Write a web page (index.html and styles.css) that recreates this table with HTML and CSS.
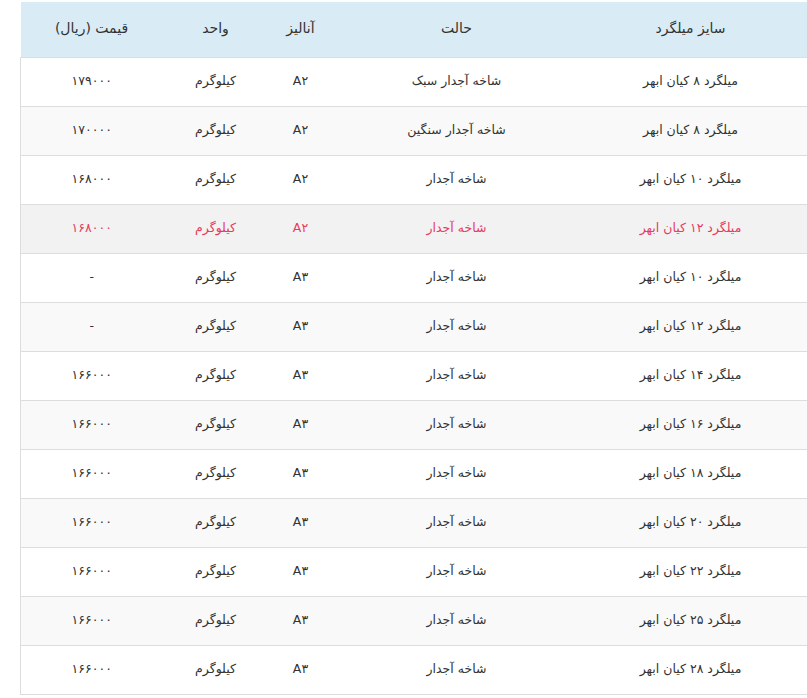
FILE: index.html
```html
<!DOCTYPE html>
<html lang="fa" dir="rtl">
<head>
<meta charset="utf-8">
<title>قیمت میلگرد</title>
<link rel="stylesheet" href="styles.css">
</head>
<body>
<div class="wrap">
<table class="price-table">
<colgroup>
<col class="c-size"><col class="c-state"><col class="c-an"><col class="c-unit"><col class="c-price">
</colgroup>
<thead>
<tr><th class="size">سایز میلگرد</th><th>حالت</th><th>آنالیز</th><th>واحد</th><th>قیمت (ریال)</th></tr>
</thead>
<tbody>
<tr><td class="size">میلگرد ۸ کیان ابهر</td><td>شاخه آجدار سبک</td><td>A۲</td><td>کیلوگرم</td><td>۱۷۹۰۰۰</td></tr>
<tr><td class="size">میلگرد ۸ کیان ابهر</td><td>شاخه آجدار سنگین</td><td>A۲</td><td>کیلوگرم</td><td>۱۷۰۰۰۰</td></tr>
<tr><td class="size">میلگرد ۱۰ کیان ابهر</td><td>شاخه آجدار</td><td>A۲</td><td>کیلوگرم</td><td>۱۶۸۰۰۰</td></tr>
<tr class="hot"><td class="size">میلگرد ۱۲ کیان ابهر</td><td>شاخه آجدار</td><td>A۲</td><td>کیلوگرم</td><td>۱۶۸۰۰۰</td></tr>
<tr><td class="size">میلگرد ۱۰ کیان ابهر</td><td>شاخه آجدار</td><td>A۳</td><td>کیلوگرم</td><td>-</td></tr>
<tr><td class="size">میلگرد ۱۲ کیان ابهر</td><td>شاخه آجدار</td><td>A۳</td><td>کیلوگرم</td><td>-</td></tr>
<tr><td class="size">میلگرد ۱۴ کیان ابهر</td><td>شاخه آجدار</td><td>A۳</td><td>کیلوگرم</td><td>۱۶۶۰۰۰</td></tr>
<tr><td class="size">میلگرد ۱۶ کیان ابهر</td><td>شاخه آجدار</td><td>A۳</td><td>کیلوگرم</td><td>۱۶۶۰۰۰</td></tr>
<tr><td class="size">میلگرد ۱۸ کیان ابهر</td><td>شاخه آجدار</td><td>A۳</td><td>کیلوگرم</td><td>۱۶۶۰۰۰</td></tr>
<tr><td class="size">میلگرد ۲۰ کیان ابهر</td><td>شاخه آجدار</td><td>A۳</td><td>کیلوگرم</td><td>۱۶۶۰۰۰</td></tr>
<tr><td class="size">میلگرد ۲۲ کیان ابهر</td><td>شاخه آجدار</td><td>A۳</td><td>کیلوگرم</td><td>۱۶۶۰۰۰</td></tr>
<tr><td class="size">میلگرد ۲۵ کیان ابهر</td><td>شاخه آجدار</td><td>A۳</td><td>کیلوگرم</td><td>۱۶۶۰۰۰</td></tr>
<tr><td class="size">میلگرد ۲۸ کیان ابهر</td><td>شاخه آجدار</td><td>A۳</td><td>کیلوگرم</td><td>۱۶۶۰۰۰</td></tr>
</tbody>
</table>
</div>
</body>
</html>
```
FILE: styles.css
```css
html, body {
  margin: 0;
  padding: 0;
  background: #fff;
  overflow: hidden;
}
body {
  font-family: "DejaVu Sans", sans-serif;
  font-size: 12.5px;
  color: #333;
}
.wrap {
  padding-top: 2px;
  direction: ltr;
  padding-left: 20px;
}
.price-table {
  direction: rtl;
  width: 800px;
  border-collapse: collapse;
  table-layout: fixed;
}
.c-size { width: 240px; }
.c-state { width: 248px; }
.c-an { width: 64px; }
.c-unit { width: 106px; }
.c-price { width: 142px; }
.price-table th {
  background: #d9ecf6;
  height: 55px;
  font-weight: normal;
  font-size: 14px;
  text-align: center;
  vertical-align: middle;
  padding: 0 0 3px;
  box-sizing: border-box;
  border-bottom: 1px solid #ddd;
}
.price-table td {
  height: 49px;
  padding: 0 0 2px;
  box-sizing: border-box;
  text-align: center;
  vertical-align: middle;
  border-bottom: 1px solid #ddd;
}
.price-table td:last-child {
  border-left: 1px solid #ddd;
}
.price-table .size {
  padding-right: 20px;
}
.price-table tbody tr:nth-child(even) {
  background: #f9f9f9;
}
.price-table tbody tr.hot {
  background: #f2f2f2;
  color: #e63c5c;
}
```
